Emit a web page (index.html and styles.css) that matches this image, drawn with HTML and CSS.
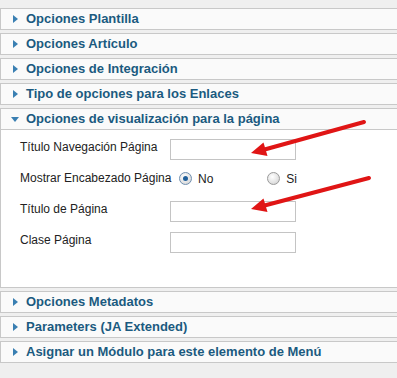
FILE: index.html
```html
<!DOCTYPE html>
<html>
<head>
<meta charset="utf-8">
<link rel="stylesheet" href="styles.css">
</head>
<body>
<div class="panes">
  <div class="pane"><div class="head"><span class="tri"></span>Opciones Plantilla</div></div>
  <div class="pane"><div class="head"><span class="tri"></span>Opciones Artículo</div></div>
  <div class="pane"><div class="head"><span class="tri"></span>Opciones de Integración</div></div>
  <div class="pane"><div class="head"><span class="tri"></span>Tipo de opciones para los Enlaces</div></div>
  <div class="pane open">
    <div class="head"><span class="tri down"></span>Opciones de visualización para la página</div>
    <div class="content">
      <div class="label">Título Navegación Página</div>
      <div class="field"><span class="input"></span></div>
      <div class="label">Mostrar Encabezado Página</div>
      <div class="field radios">
        <span class="radio checked"></span><span class="rlabel">No</span>
        <span class="radio second"></span><span class="rlabel">Si</span>
      </div>
      <div class="label">Título de Página</div>
      <div class="field"><span class="input"></span></div>
      <div class="label">Clase Página</div>
      <div class="field"><span class="input"></span></div>
    </div>
  </div>
  <div class="pane"><div class="head"><span class="tri"></span>Opciones Metadatos</div></div>
  <div class="pane"><div class="head"><span class="tri"></span>Parameters (JA Extended)</div></div>
  <div class="pane"><div class="head"><span class="tri"></span>Asignar un Módulo para este elemento de Menú</div></div>
</div>
<svg class="arrows" width="397" height="378" viewBox="0 0 397 378">
  <g stroke="#e01515" stroke-width="4" stroke-linecap="round" fill="#e01515">
    <line x1="364" y1="122" x2="265.5" y2="149.3"/>
    <line x1="369" y1="178" x2="265.5" y2="205.3"/>
  </g>
  <g fill="#e01515">
    <polygon points="251,153 267.5,156 263.5,142.5"/>
    <polygon points="251,209 267.5,212 263.5,198.5"/>
  </g>
</svg>
</body>
</html>
```
FILE: styles.css
```css
html, body {
  margin: 0;
  padding: 0;
  background: #efefef;
  overflow: hidden;
}
body {
  position: relative;
  width: 397px;
  height: 378px;
  font-family: "Liberation Sans", Arial, sans-serif;
}
.panes {
  padding-top: 8px;
}
.pane {
  border: 1px solid #c8c8c8;
  border-right: none;
  margin-bottom: 3px;
  background: #fafafa;
}
.head {
  height: 20px;
  line-height: 20px;
  font-size: 13px;
  font-weight: bold;
  color: #1b5a80;
  display: flex;
  align-items: center;
  padding-left: 12px;
  white-space: nowrap;
}
.tri {
  width: 0;
  height: 0;
  border-top: 4px solid transparent;
  border-bottom: 4px solid transparent;
  border-left: 5px solid #3a7fb2;
  margin-right: 8px;
  margin-left: 0;
}
.tri.down {
  border-left: 4px solid transparent;
  border-right: 4px solid transparent;
  border-top: 5px solid #3a7fb2;
  border-bottom: none;
  margin-left: -2px;
  margin-right: 7px;
}
.open .head {
  border-bottom: 1px solid #c8c8c8;
}
.content {
  background: #fff;
  height: 148px;
  padding: 9px 0 0 19px;
  display: grid;
  grid-template-columns: 150px auto;
  grid-auto-rows: 21px;
  row-gap: 10px;
  align-content: start;
  font-size: 12px;
  color: #222;
}
.label {
  line-height: 17px;
  white-space: nowrap;
}
.field {
  display: flex;
  align-items: flex-start;
}
.input {
  display: block;
  width: 124px;
  height: 19px;
  border: 1px solid #c4c4c4;
  background: #fff;
}
.radios {
  align-items: center;
  height: 17px;
  padding-left: 9px;
}
.radio {
  width: 11px;
  height: 11px;
  border: 1px solid #9a9a9a;
  border-radius: 50%;
  background: radial-gradient(circle at 40% 35%, #ffffff 0%, #e2e2e2 60%, #c8c8c8 100%);
  box-sizing: content-box;
  position: relative;
}
.radio.checked::after {
  content: "";
  position: absolute;
  left: 3px;
  top: 3px;
  width: 5px;
  height: 5px;
  border-radius: 50%;
  background: #1f5f9a;
}
.radio.checked {
  border-color: #6f8fb0;
}
.radio.second {
  margin-left: 54px;
}
.rlabel {
  margin-left: 6px;
}
.arrows {
  position: absolute;
  left: 0;
  top: 0;
  pointer-events: none;
}
```
